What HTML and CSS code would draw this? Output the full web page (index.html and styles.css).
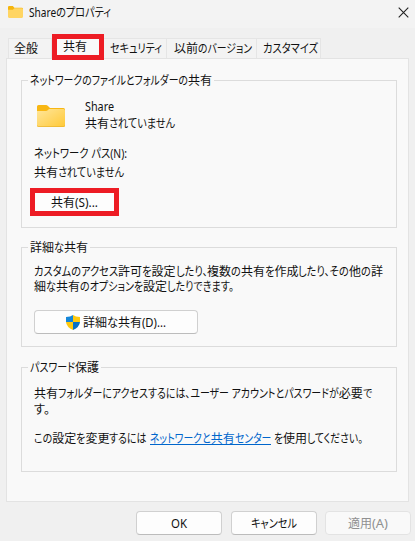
FILE: index.html
```html
<!DOCTYPE html>
<html lang="ja">
<head>
<meta charset="utf-8">
<title>Shareのプロパティ</title>
<link rel="stylesheet" href="styles.css">
</head>
<body>
<div class="dialog">
  <header class="titlebar">
    <svg class="title-icon" width="15" height="12" viewBox="0 0 28 22"><path d="M0 2Q0 0 2 0H9L12 3H26Q28 3 28 5V10H0Z" fill="#f5b50d"/><path d="M0 7H9L12 4H26Q28 4 28 6V20Q28 22 26 22H2Q0 22 0 20Z" fill="#ffd563"/></svg>
    <span class="fit title" data-width="82">Shareのプロパティ</span>
    <svg class="close" width="11" height="11" viewBox="0 0 11 11"><path d="M.7.7 10.3 10.3M10.3.7.7 10.3" stroke="#222" stroke-width="1.1" fill="none"/></svg>
  </header>
  <nav class="tabs">
    <div class="tab general"><span class="fit" data-width="24">全般</span></div>
    <div class="tab active"><span class="fit" data-width="24">共有</span></div>
    <div class="tab security"><span class="fit" data-width="52">セキュリティ</span></div>
    <div class="tab versions"><span class="fit" data-width="78">以前のバージョン</span></div>
    <div class="tab custom"><span class="fit" data-width="55">カスタマイズ</span></div>
  </nav>
  <main class="panel">
    <section class="group share">
      <h2 class="legend"><span class="fit" data-width="182">ネットワークのファイルとフォルダーの共有</span></h2>
      <div class="item">
        <svg width="28" height="22" viewBox="0 0 28 22"><defs><linearGradient id="f" x1="0" y1="0" x2="1" y2="1"><stop offset="0" stop-color="#ffe69b"/><stop offset="1" stop-color="#ffc937"/></linearGradient></defs><path d="M0 1.5Q0 0 1.5 0H9Q10 0 11 1L13 3H26.5Q28 3 28 4.500V9H0Z" fill="#f8b713"/><path d="M0 6H9Q10 6 11 5L12 4H26.500Q28 4 28 5.500V20.500Q28 22 26.500 22H1.500Q0 22 0 20.500Z" fill="url(#f)"/><path d="M.3 20.500Q.5 21.600 1.500 21.600H26.500Q27.600 21.600 27.700 20.500" fill="none" stroke="#e8b02b" stroke-width=".7"/></svg>
        <div class="item-text">
          <div class="line"><span class="fit" data-width="29">Share</span></div>
          <div class="line"><span class="fit" data-width="90">共有されていません</span></div>
        </div>
      </div>
      <div class="line path-label"><span class="fit" data-width="93">ネットワーク パス(N):</span></div>
      <div class="line path-value"><span class="fit" data-width="90">共有されていません</span></div>
      <button class="share-button"><span class="fit" data-width="47">共有(S)...</span></button>
    </section>
    <section class="group advanced">
      <h2 class="legend"><span class="fit" data-width="58">詳細な共有</span></h2>
      <div class="line"><span class="fit" data-width="349">カスタムのアクセス許可を設定したり、複数の共有を作成したり、その他の詳</span></div>
      <div class="line"><span class="fit" data-width="200">細な共有のオプションを設定したりできます。</span></div>
      <button class="button advanced-button">
        <svg width="14" height="15" viewBox="0 0 14 15"><path d="M7 0Q4.500 2 0 2V7H7Z" fill="#1687d9"/><path d="M7 0Q9.500 2 14 2V7H7Z" fill="#ffc90e"/><path d="M0 7H7V15Q.4 12 0 7Z" fill="#ffc90e"/><path d="M14 7H7V15Q13.600 12 14 7Z" fill="#0872c4"/></svg>
        <span class="fit" data-width="83">詳細な共有(D)...</span>
      </button>
    </section>
    <section class="group password">
      <h2 class="legend"><span class="fit" data-width="69">パスワード保護</span></h2>
      <div class="line"><span class="fit" data-width="338">共有フォルダーにアクセスするには、ユーザー アカウントとパスワードが必要で</span></div>
      <div class="line second"><span class="fit" data-width="16">す。</span></div>
      <div class="line change"><span class="fit" data-width="113">この設定を変更するには</span><a class="fit" data-width="121">ネットワークと共有センター</a><span class="fit" data-width="89">を使用してください。</span></div>
    </section>
  </main>
  <footer class="actions">
    <button class="button"><span class="fit" data-width="16">OK</span></button>
    <button class="button"><span class="fit" data-width="46">キャンセル</span></button>
    <button class="button disabled" disabled><span class="fit" data-width="40">適用(A)</span></button>
  </footer>
</div>
<script src="script.js"></script>
</body>
</html>
```
FILE: styles.css
```css
* { box-sizing: border-box; }
body { margin: 0; background: #f0f0f0; color: #111; font: 12px/15px "Noto Sans", "Noto Sans CJK JP", sans-serif; }
.dialog { width: 415px; height: 541px; overflow: hidden; display: flex; flex-direction: column; }
.titlebar { height: 28px; flex: none; display: flex; align-items: center; padding: 0 6px 4px 8px; background: #f3f3f3; }
.title { margin-left: 6px; }
.close { margin-left: auto; }
.fit { display: inline-block; flex: none; white-space: pre; height: 15px; line-height: 15px; text-align: left; font-feature-settings: "palt"; }
.run { display: inline-block; transform-origin: 0 50%; vertical-align: top; white-space: pre; }
.tabs { height: 30px; flex: none; display: flex; align-items: flex-end; padding-left: 8px; }
.tab { height: 20px; flex: none; padding: 2px 0 0 7px; background: #f3f3f3; border: solid #e5e5e5; border-width: 1px 1px 0 0; }
.general { width: 44px; padding-left: 5px; border-left-width: 1px; }
.active { width: 52px; height: 26px; padding: 0 0 0 6px; margin-bottom: -2px; border: 5px solid #ed1c24; background: #f9f9f9; position: relative; }
.security { width: 63px; padding-left: 6px; }
.versions { width: 90px; }
.custom { width: 64px; padding-left: 6px; }
.panel { flex: none; width: 403px; height: 444px; margin-left: 6px; padding: 21px 11px 0 14px; border: 1px solid #e3e3e3; background: #f9f9f9; }
.group { border: 1px solid #dcdcdc; padding: 0 0 0 12px; }
.legend { width: fit-content; height: 15px; margin: -8px 0 0 -6px; padding: 0 2px; background: #f9f9f9; font-size: 12px; font-weight: 400; line-height: 15px; position: relative; }
.line { height: 15px; white-space: nowrap; display: flex; }
.share { height: 148px; }
.item { display: flex; align-items: center; gap: 20px; margin: 11px 0 0 3px; }
.item-text .line { height: 17px; }
.path-label { margin-top: 13px; }
.path-value { margin-top: 4px; }
.advanced { height: 100px; margin-top: 19px; }
.advanced .legend + .line { margin-top: 9px; }
.password { height: 105px; margin-top: 20px; }
.password .legend + .line { margin-top: 11px; }
.password .second { margin-top: 1px; }
.password .change { margin-top: 14px; }
.change a { color: #0066cc; margin: 0 3px; height: 14px; border-bottom: 1px solid #0066cc; }
button { font: inherit; color: inherit; padding: 0; display: flex; align-items: center; justify-content: center; }
.share-button { width: 89px; height: 28px; margin: 8px 0 0 -4px; border: 5px solid #ed1c24; background: #fdfdfd; }
.button { width: 86px; height: 24px; background: #fdfdfd; border: 1px solid #d0d0d0; border-bottom-color: #bcbcbc; border-radius: 4px; }
.advanced-button { width: 164px; margin-top: 16px; gap: 3px; }
.actions { display: flex; gap: 9px; padding: 9px 0 0 136px; }
.actions .button { flex: none; }
.actions .button + .disabled { margin-left: -1px; background: #f9f9f9; border-color: #e3e3e3; color: #909090; }
```
FILE: script.js
```js
// Keeps kanji full width and condenses kana and Latin runs to the label width.
document.querySelectorAll('.fit').forEach(label => {
  const width = Number(label.dataset.width);
  const parts = label.textContent.match(/[\u4e00-\u9fff]+|[^\u4e00-\u9fff]+/g);
  label.textContent = '';
  const runs = parts.map(text => {
    const run = document.createElement('span');
    run.className = 'run';
    run.textContent = text;
    label.append(run);
    return { run, kanji: /[\u4e00-\u9fff]/.test(text), width: run.getBoundingClientRect().width };
  });
  const sum = kanji => runs.filter(r => r.kanji === kanji).reduce((a, r) => a + r.width, 0);
  const flexible = sum(false);
  const scale = flexible ? (width - sum(true)) / flexible : 1;
  runs.filter(r => !r.kanji).forEach(r => {
    r.run.style.width = r.width * scale + 'px';
    r.run.style.transform = `scaleX(${scale})`;
  });
  label.style.width = width + 'px';
});
```
